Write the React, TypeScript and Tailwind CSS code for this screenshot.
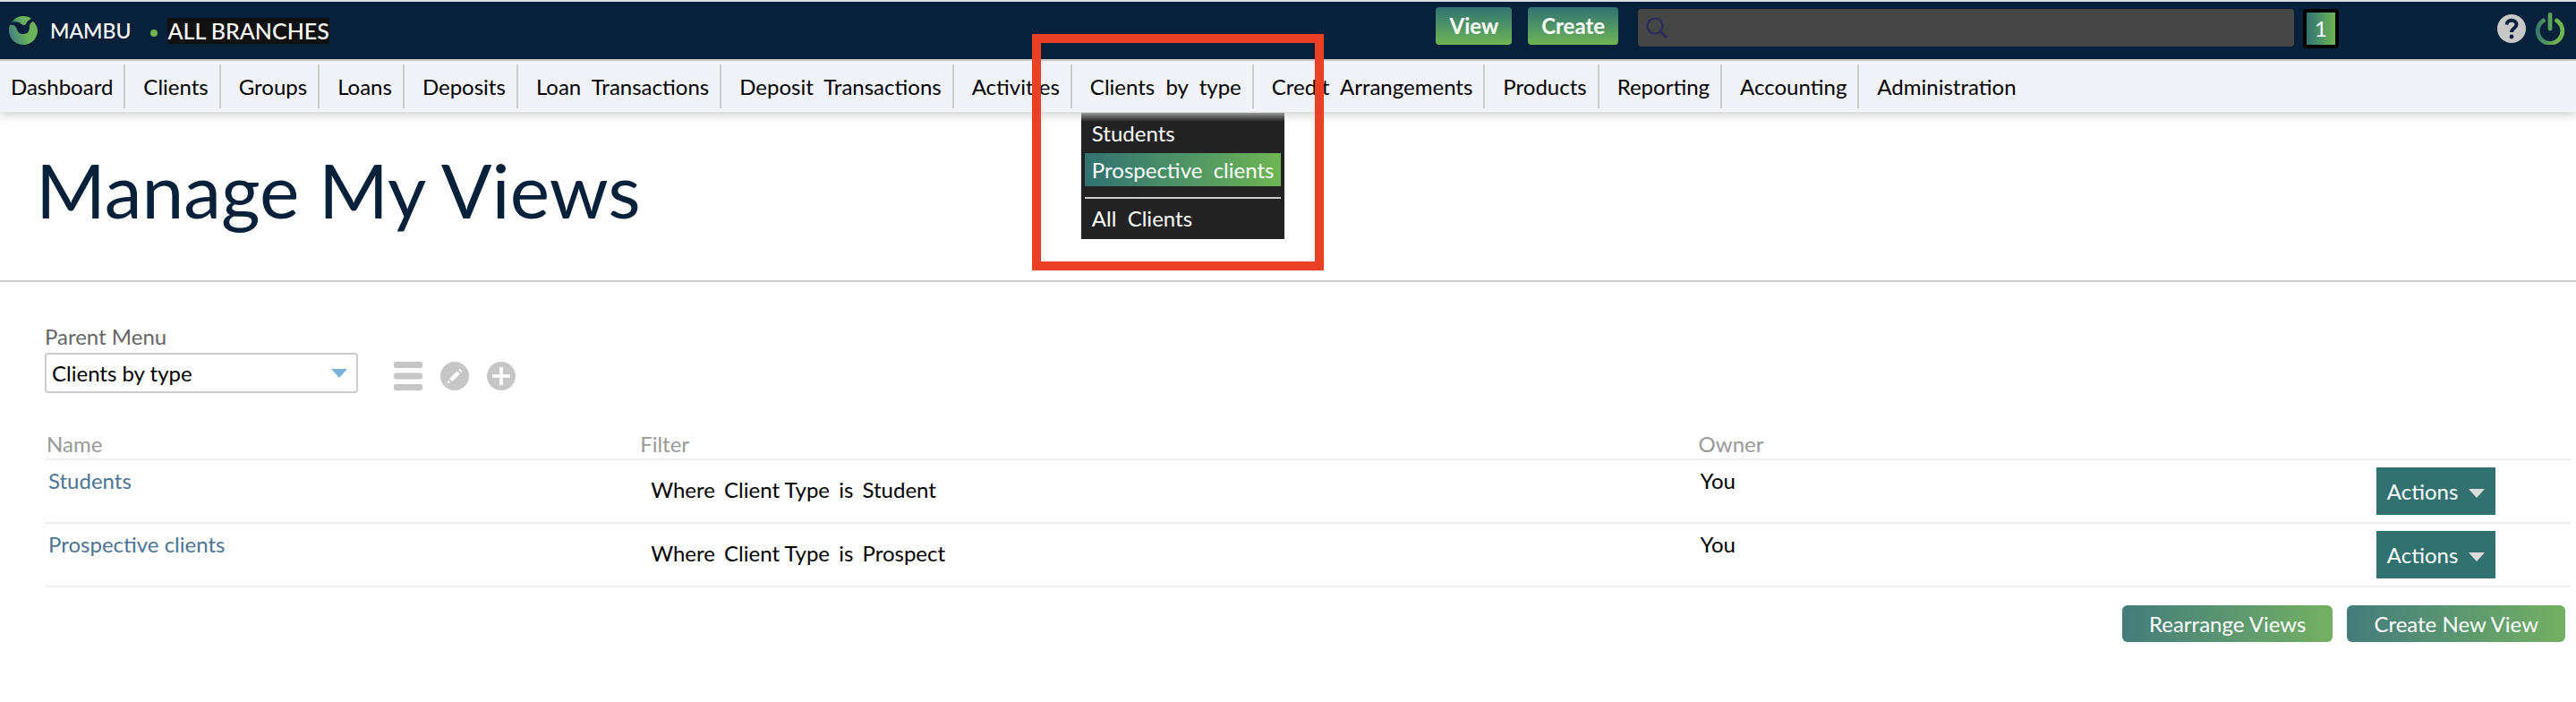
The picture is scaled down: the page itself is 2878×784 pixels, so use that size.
import React from "react";

type NavItem = { label: string; open?: boolean };

const navItems: NavItem[] = [
  { label: "Dashboard" },
  { label: "Clients" },
  { label: "Groups" },
  { label: "Loans" },
  { label: "Deposits" },
  { label: "Loan  Transactions" },
  { label: "Deposit  Transactions" },
  { label: "Activities" },
  { label: "Clients  by  type", open: true },
  { label: "Credit  Arrangements" },
  { label: "Products" },
  { label: "Reporting" },
  { label: "Accounting" },
  { label: "Administration" },
];

const views = [
  { name: "Students", field: "Client Type", value: "Student", owner: "You" },
  {
    name: "Prospective clients",
    field: "Client Type",
    value: "Prospect",
    owner: "You",
  },
];

function Logo() {
  return (
    <svg className="h-8 w-8" viewBox="0 0 32 32" aria-hidden="true">
      <defs>
        <linearGradient id="logo" x1="0" y1="0.7" x2="1" y2="0.4">
          <stop offset="0" stopColor="#3b7b86" />
          <stop offset="0.6" stopColor="#6bb35a" />
        </linearGradient>
      </defs>
      <path
        d="M3 7C6 2.500 10 0 16 0c4 0 7 1 9 3-3 1-5 3-6 5.500-1 2-3 2-5 .5-3-2.500-7-3.500-11-2z"
        fill="url(#logo)"
      />
      <path
        d="M1 10c4-1 7 1 8 5 1 3 3 5 7 5 6 0 7-4 7-8 0-3 1-5 4-6 3 3 5 6 5 10 0 9-7 16-16 16S0 25 0 16c0-2 0-4 1-6z"
        fill="url(#logo)"
      />
    </svg>
  );
}

function PowerIcon() {
  return (
    <svg className="h-9 w-[34px]" viewBox="0 0 34 36" fill="none" aria-hidden="true">
      <defs>
        <linearGradient id="power" gradientUnits="userSpaceOnUse" x1="0" y1="0" x2="34" y2="0">
          <stop offset="0" stopColor="#317270" />
          <stop offset="0.7" stopColor="#6eb551" />
        </linearGradient>
      </defs>
      <path
        d="M9.500 9a13.800 13.800 0 1 0 15 0M17 2.500v15.500"
        stroke="url(#power)"
        strokeWidth="4.8"
        strokeLinecap="round"
      />
    </svg>
  );
}

function HelpIcon() {
  return (
    <svg className="h-8 w-8" viewBox="0 0 32 32" fill="none" aria-hidden="true">
      <circle cx="16" cy="16" r="16" fill="#c8c8c8" />
      <path
        d="M10.500 11.500C11 5 21.500 5.500 21.500 11.500c0 4-5.500 4-5.500 8.500"
        stroke="#08213a"
        strokeWidth="4"
      />
      <circle cx="16" cy="25" r="2.4" fill="#08213a" />
    </svg>
  );
}

function Header() {
  return (
    <header className="flex h-[68px] border-t-2 border-b-2 border-t-[#d9dce0] border-b-[#cccccc] bg-[#08213a] text-white">
      <div className="flex w-[55.75%] items-start pt-4 pl-[10px]">
        <Logo />
        <span className="ml-[14px] text-[23px] leading-8 font-medium">MAMBU</span>
        <span className="mt-[15px] ml-[22px] h-2 w-2 rounded-full bg-[#6eb551]" />
        <span className="mt-[2px] ml-[11px] bg-[#111111] text-[25px] leading-[29px] font-medium">
          ALL BRANCHES
        </span>
      </div>
      <div className="flex flex-1 items-start pt-[6px] pr-3">
        <button className="h-[42px] rounded bg-linear-to-b from-[#317270] to-[#6eb551] px-[15px] font-bold">
          View
        </button>
        <button className="ml-[18px] h-[42px] rounded bg-linear-to-b from-[#317270] to-[#6eb551] px-[15px] font-bold">
          Create
        </button>
        <div className="mt-[2px] ml-[22px] flex h-[42px] flex-1 items-center rounded bg-[#464646] pl-[9px]">
          <svg className="h-6 w-6" viewBox="0 0 24 24" fill="none" aria-hidden="true">
            <circle cx="10" cy="10" r="8.5" stroke="#2c2a5c" strokeWidth="2.2" />
            <path d="M16 16l7 7" stroke="#2c2a5c" strokeWidth="3" />
          </svg>
          <input
            type="text"
            aria-label="Search"
            className="ml-2 h-full flex-1 bg-transparent outline-none"
          />
        </div>
        <button className="mt-[2px] ml-[10px] h-11 w-10 rounded border-4 border-black bg-linear-to-r from-[#317270] to-[#6eb551]">
          1
        </button>
        <button aria-label="Help" className="mt-2 ml-[177px]">
          <HelpIcon />
        </button>
        <button aria-label="Log out" className="mt-[6px] ml-[10px]">
          <PowerIcon />
        </button>
      </div>
    </header>
  );
}

function ViewsMenu() {
  return (
    <>
      <div className="absolute top-[54px] left-[10px] z-10 w-max bg-linear-to-b from-[#999999] via-[#222222] via-[10px] to-[#222222] px-1 pt-[5px] pb-[5px] text-white">
        <a href="#students" className="block px-2 pb-1 leading-[36px]">
          Students
        </a>
        <a
          href="#prospective"
          className="block bg-linear-to-r from-[#317270] to-[#6eb551] px-2 leading-[37px]"
        >
          {"Prospective  clients"}
        </a>
        <hr className="mt-3 mb-1 border-t-2 border-[#cccccc]" />
        <a href="#all" className="block px-2 leading-[36px]">
          {"All  Clients"}
        </a>
      </div>
      <div className="pointer-events-none absolute top-[-34px] left-[-45px] z-20 h-[264px] w-[326px] border-10 border-[#ec4026]" />
    </>
  );
}

function Nav() {
  return (
    <nav className="relative flex bg-[#f2f3f9] py-1 pr-4 whitespace-pre text-black shadow-[0_4px_10px_rgba(0,0,0,0.18)]">
      {navItems.map((item) => (
        <div
          key={item.label}
          className="relative border-r-2 border-[#cccccc] pr-3 pl-5 first:pl-3 last:border-r-0"
        >
          <a href="#nav" className="leading-[49px]">
            {item.label}
          </a>
          {item.open && <ViewsMenu />}
        </div>
      ))}
    </nav>
  );
}

function Toolbar() {
  return (
    <div className="flex items-end">
      <div className="flex flex-col">
        <label htmlFor="parent" className="leading-8 text-[#666666]">
          Parent Menu
        </label>
        <div className="relative mt-[2px]">
          <select
            id="parent"
            className="h-[45px] w-[350px] appearance-none rounded border-2 border-[#cccccc] bg-white px-[6px] text-black"
          >
            <option>Clients by type</option>
          </select>
          <svg
            className="pointer-events-none absolute top-[18px] right-3 h-[10px] w-[18px]"
            viewBox="0 0 18 10"
            aria-hidden="true"
          >
            <path d="M0 0h18l-9 10z" fill="#79b2d8" />
          </svg>
        </div>
      </div>
      <div className="mb-[3px] ml-10 flex gap-5">
        <button aria-label="Reorder">
          <svg className="h-8 w-8" viewBox="0 0 32 32" fill="#c6c6c6">
            <rect width="32" height="7" rx="2" />
            <rect y="12.5" width="32" height="7" rx="3" />
            <rect y="25" width="32" height="7" rx="2" />
          </svg>
        </button>
        <button aria-label="Edit">
          <svg className="h-8 w-8" viewBox="0 0 32 32">
            <circle cx="16" cy="16" r="16" fill="#c6c6c6" />
            <path
              d="M7.500 24.500l1.200-4 2.800 2.800zM10 19l8.500-8.500 3.300 3.300-8.500 8.500zM20 9l1.500-1.200 3 3-1.200 1.500z"
              fill="#fff"
            />
          </svg>
        </button>
        <button aria-label="Add">
          <svg className="h-8 w-8" viewBox="0 0 32 32">
            <circle cx="16" cy="16" r="16" fill="#c6c6c6" />
            <path d="M16 6v20M6 16h20" stroke="#fff" strokeWidth="3.6" />
          </svg>
        </button>
      </div>
    </div>
  );
}

function ViewsTable() {
  return (
    <table className="mt-10 w-full table-fixed text-left text-black">
      <thead>
        <tr className="border-b-2 border-[#eeeeee] text-[#999999]">
          <th className="w-[23.5%] px-[2px] pt-[1px] leading-8 font-normal">Name</th>
          <th className="w-[41.9%] px-[2px] pt-[1px] leading-8 font-normal">Filter</th>
          <th className="w-[26.8%] px-[2px] pt-[1px] leading-8 font-normal">Owner</th>
          <th aria-label="Actions" />
        </tr>
      </thead>
      <tbody>
        {views.map((view) => (
          <tr key={view.name} className="border-b-2 border-[#eeeeee] align-top">
            <td className="px-1 pt-[7px] leading-8">
              <a href="#view" className="text-[#4b7494]">
                {view.name}
              </a>
            </td>
            <td className="px-[14px] pt-[17px] leading-8">
              <span className="mr-1">Where</span>{" "}
              <span className="mr-1">{view.field}</span>{" "}
              <span className="mr-1">is</span> <span>{view.value}</span>
            </td>
            <td className="px-1 pt-[7px] leading-8">{view.owner}</td>
            <td className="py-2 pl-[3px]">
              <button className="flex h-[53px] items-center gap-3 bg-[#317270] px-3 text-white">
                Actions
                <svg className="mt-1 h-[10px] w-[18px]" viewBox="0 0 18 10" aria-hidden="true">
                  <path d="M0 0h18l-9 10z" fill="#dddddd" />
                </svg>
              </button>
            </td>
          </tr>
        ))}
      </tbody>
    </table>
  );
}

function App() {
  return (
    <div className="min-h-screen bg-white font-[Lato,sans-serif] text-2xl">
      <Header />
      <Nav />
      <h1 className="border-b-2 border-[#cccccc] pt-9 pb-[50px] pl-10 text-[84px] leading-[102px] text-[#08213a]">
        Manage My Views
      </h1>
      <main className="pt-[45px] pr-[6px] pb-16 pl-[50px]">
        <Toolbar />
        <ViewsTable />
        <div className="mt-5 flex justify-end gap-4 pr-[6px] text-white">
          <button className="h-[41px] rounded-md bg-linear-to-r from-[#447c7a] to-[#74b061] px-[30px]">
            Rearrange Views
          </button>
          <button className="h-[41px] rounded-md bg-linear-to-r from-[#447c7a] to-[#74b061] px-[30px]">
            Create New View
          </button>
        </div>
      </main>
    </div>
  );
}

export default App;
